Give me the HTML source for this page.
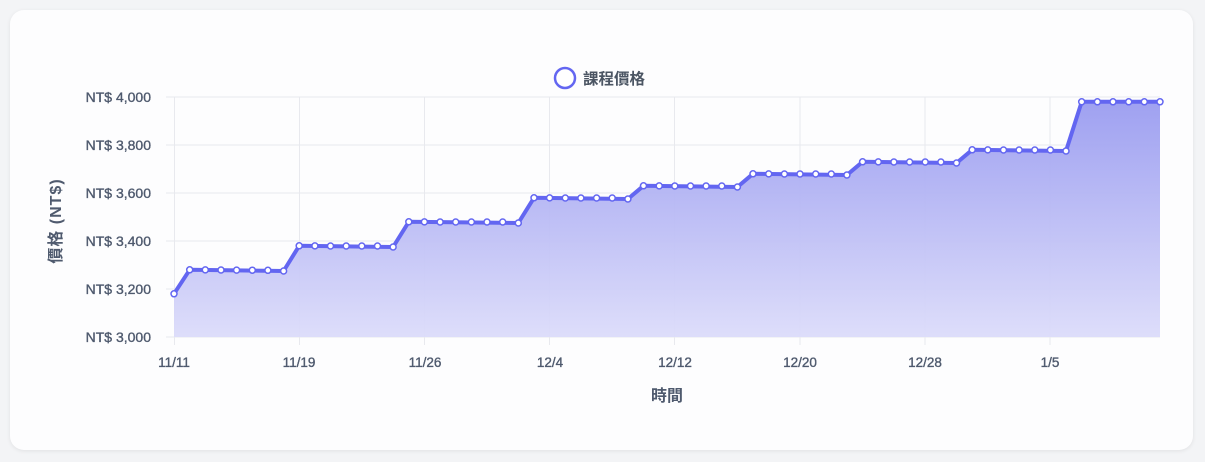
<!DOCTYPE html>
<html><head><meta charset="utf-8"><style>
html,body{margin:0;padding:0;width:1205px;height:462px;background:#f3f4f6;overflow:hidden}
.card{position:absolute;left:10px;top:10px;width:1183px;height:440px;background:#fdfdfe;border-radius:14px;box-shadow:0 1px 4px rgba(0,0,0,.08)}
svg{position:absolute;left:0;top:0}
text{font-family:"Liberation Sans","Noto Sans CJK TC",sans-serif;fill:#4f5a6e}
.m{stroke:#4f5a6e;stroke-width:0.35}
</style></head><body>
<div class="card"></div>
<svg width="1205" height="462" viewBox="0 0 1205 462">
<defs><linearGradient id="g" x1="0" y1="0" x2="0" y2="1">
<stop offset="0" stop-color="#9a9cf0"/><stop offset="1" stop-color="#dcdcfa"/></linearGradient></defs>
<g stroke="#e8e9ee" stroke-width="1">
<line x1="166" y1="97" x2="1160" y2="97"/><line x1="166" y1="145" x2="1160" y2="145"/><line x1="166" y1="193" x2="1160" y2="193"/><line x1="166" y1="241" x2="1160" y2="241"/><line x1="166" y1="289" x2="1160" y2="289"/><line x1="166" y1="337" x2="1160" y2="337"/>
<line x1="174.5" y1="97" x2="174.5" y2="345"/><line x1="299.5" y1="97" x2="299.5" y2="345"/><line x1="424.5" y1="97" x2="424.5" y2="345"/><line x1="549.5" y1="97" x2="549.5" y2="345"/><line x1="674.5" y1="97" x2="674.5" y2="345"/><line x1="800" y1="97" x2="800" y2="345"/><line x1="925" y1="97" x2="925" y2="345"/><line x1="1050" y1="97" x2="1050" y2="345"/>
</g>
<path fill="url(#g)" opacity="0.95" d="M174,293.8 L189.7,269.8 L283.6,271 L299.2,245.8 L393.1,247 L408.8,221.8 L518.3,223 L534,197.8 L627.9,199 L643.5,185.8 L737.4,187 L753,173.8 L846.9,175 L862.6,161.8 L956.5,163 L972.2,149.8 L1066,151 L1081.7,101.8 L1160,101.8 L1160,337 L174,337 Z"/>
<path fill="none" stroke="#6366f1" stroke-width="4" stroke-linejoin="round" d="M174,293.8 L189.7,269.8 L283.6,271 L299.2,245.8 L393.1,247 L408.8,221.8 L518.3,223 L534,197.8 L627.9,199 L643.5,185.8 L737.4,187 L753,173.8 L846.9,175 L862.6,161.8 L956.5,163 L972.2,149.8 L1066,151 L1081.7,101.8 L1160,101.8"/>
<g fill="#fff" stroke="#6366f1" stroke-width="1.5">
<circle cx="174" cy="293.8" r="3"/>
<circle cx="189.7" cy="269.8" r="3"/><circle cx="205.3" cy="269.9" r="3"/><circle cx="221" cy="270" r="3"/><circle cx="236.6" cy="270.1" r="3"/><circle cx="252.3" cy="270.2" r="3"/><circle cx="267.9" cy="270.3" r="3"/><circle cx="283.6" cy="271" r="3"/>
<circle cx="299.2" cy="245.8" r="3"/><circle cx="314.9" cy="245.9" r="3"/><circle cx="330.5" cy="246" r="3"/><circle cx="346.2" cy="246" r="3"/><circle cx="361.8" cy="246" r="3"/><circle cx="377.5" cy="246" r="3"/><circle cx="393.1" cy="247" r="3"/>
<circle cx="408.8" cy="221.8" r="3"/><circle cx="424.4" cy="221.9" r="3"/><circle cx="440.1" cy="222" r="3"/><circle cx="455.7" cy="222" r="3"/><circle cx="471.4" cy="222" r="3"/><circle cx="487" cy="222" r="3"/><circle cx="502.7" cy="222" r="3"/><circle cx="518.3" cy="223" r="3"/>
<circle cx="534" cy="197.8" r="3"/><circle cx="549.6" cy="197.9" r="3"/><circle cx="565.3" cy="198" r="3"/><circle cx="580.9" cy="198" r="3"/><circle cx="596.6" cy="198" r="3"/><circle cx="612.2" cy="198" r="3"/><circle cx="627.9" cy="199" r="3"/>
<circle cx="643.5" cy="185.8" r="3"/><circle cx="659.2" cy="185.9" r="3"/><circle cx="674.8" cy="186" r="3"/><circle cx="690.5" cy="186" r="3"/><circle cx="706.1" cy="186" r="3"/><circle cx="721.8" cy="186" r="3"/><circle cx="737.4" cy="187" r="3"/>
<circle cx="753" cy="173.8" r="3"/><circle cx="768.7" cy="173.9" r="3"/><circle cx="784.4" cy="174" r="3"/><circle cx="800" cy="174" r="3"/><circle cx="815.7" cy="174" r="3"/><circle cx="831.3" cy="174" r="3"/><circle cx="846.9" cy="175" r="3"/>
<circle cx="862.6" cy="161.8" r="3"/><circle cx="878.3" cy="161.9" r="3"/><circle cx="893.9" cy="162" r="3"/><circle cx="909.6" cy="162" r="3"/><circle cx="925.2" cy="162" r="3"/><circle cx="940.9" cy="162" r="3"/><circle cx="956.5" cy="163" r="3"/>
<circle cx="972.2" cy="149.8" r="3"/><circle cx="987.8" cy="149.9" r="3"/><circle cx="1003.5" cy="150" r="3"/><circle cx="1019.1" cy="150" r="3"/><circle cx="1034.8" cy="150" r="3"/><circle cx="1050.4" cy="150" r="3"/><circle cx="1066" cy="151" r="3"/>
<circle cx="1081.7" cy="101.8" r="3"/><circle cx="1097.4" cy="101.8" r="3"/><circle cx="1113" cy="101.8" r="3"/><circle cx="1128.7" cy="101.8" r="3"/><circle cx="1144.3" cy="101.8" r="3"/><circle cx="1160" cy="101.8" r="3"/>
</g>
<circle cx="565" cy="78" r="10" fill="#fff" stroke="#6366f1" stroke-width="2.5"/>
<text x="583" y="84" font-size="15.5" font-weight="bold" style="fill:#4b5563">課程價格</text>
<g font-size="14" text-anchor="end" class="m">
<text x="151" y="102" class="m">NT$ 4,000</text><text x="151" y="150" class="m">NT$ 3,800</text><text x="151" y="198" class="m">NT$ 3,600</text><text x="151" y="246" class="m">NT$ 3,400</text><text x="151" y="294" class="m">NT$ 3,200</text><text x="151" y="342" class="m">NT$ 3,000</text>
</g>
<g font-size="13.5" text-anchor="middle">
<text x="174" y="367" class="m">11/11</text><text x="299" y="367" class="m">11/19</text><text x="425" y="367" class="m">11/26</text><text x="550" y="367" class="m">12/4</text><text x="675" y="367" class="m">12/12</text><text x="800" y="367" class="m">12/20</text><text x="925" y="367" class="m">12/28</text><text x="1050" y="367" class="m">1/5</text>
</g>
<text x="667" y="401" font-size="16" font-weight="bold" text-anchor="middle">時間</text>
<text transform="translate(61,221) rotate(-90)" font-size="16" font-weight="bold" text-anchor="middle" letter-spacing="1">價格 (NT$)</text>
</svg>
</body></html>
